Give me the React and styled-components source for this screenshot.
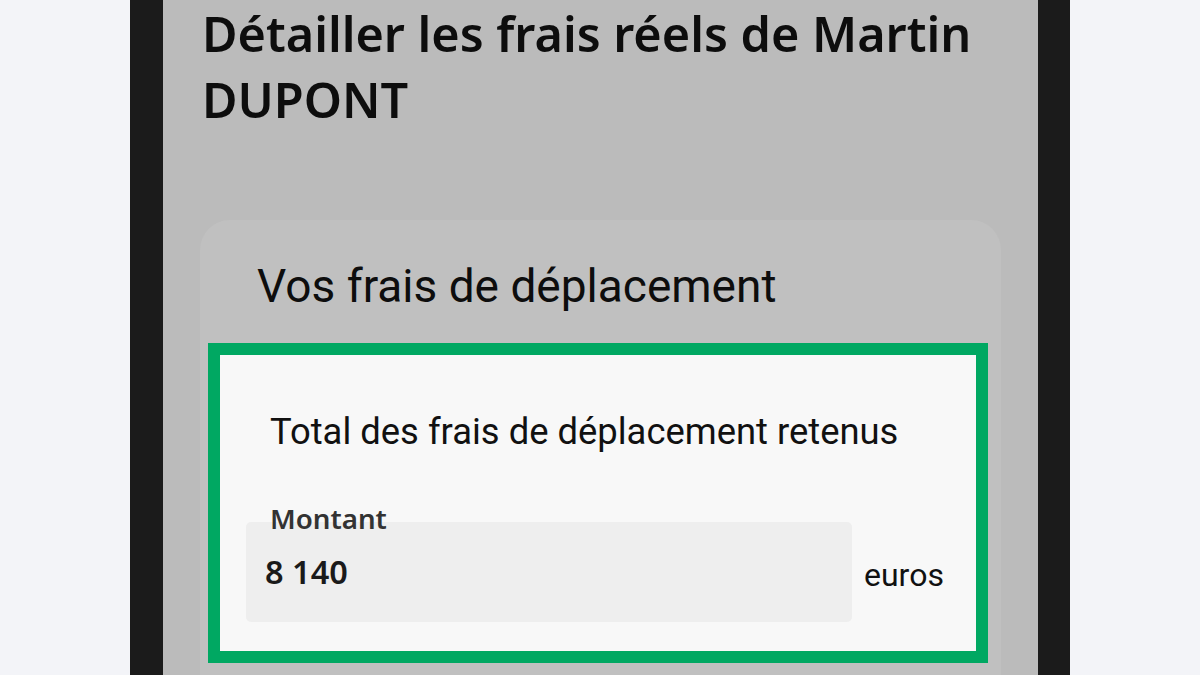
import React from 'react'
import styled, { createGlobalStyle } from 'styled-components'

const GlobalStyle = createGlobalStyle`
  html, body {
    margin: 0;
    padding: 0;
    background: #f3f4f8;
  }
  body {
    font-family: Roboto, "Liberation Sans", sans-serif;
  }
`

const Page = styled.div`
  width: 1200px;
  height: 675px;
  overflow: hidden;
  display: flex;
  justify-content: center;
  background: #f3f4f8;
`

const Phone = styled.div`
  width: 940px;
  height: 675px;
  box-sizing: border-box;
  background: #1b1b1b;
  padding: 0 32px 0 33px;
  display: flex;
`

const Screen = styled.div`
  flex: 1;
  background: #bbbbbb;
  padding: 0 37px;
  display: flex;
  flex-direction: column;
  overflow: hidden;
`

const Title = styled.h1`
  margin: 0;
  padding: 0 0 0 2px;
  font-family: "Noto Sans", "Open Sans", sans-serif;
  font-weight: 600;
  font-size: 48.6px;
  line-height: 66px;
  color: #0d0d0d;
`

const Card = styled.section`
  margin-top: 88px;
  background: #c0c0c0;
  border-radius: 30px 30px 0 0;
  padding: 40px 13px 30px 8px;
  flex: 1;
`

const CardTitle = styled.h2`
  margin: 0 0 31px 49px;
  font-family: Roboto, sans-serif;
  font-weight: 400;
  font-size: 46px;
  line-height: 52px;
  color: #0d0d0d;
`

const Highlight = styled.div`
  border: 12px solid #00a862;
  background: #f8f8f8;
  padding: 55px 32px 29px 26px;
`

const FieldTitle = styled.div`
  font-family: Roboto, sans-serif;
  font-size: 36.4px;
  line-height: 44px;
  color: #111;
  margin-left: 24px;
`

const FieldRow = styled.div`
  margin-top: 68px;
  display: flex;
  align-items: flex-end;
  gap: 12px;
`

const InputBox = styled.div`
  position: relative;
  width: 606px;
  height: 100px;
  background: #eeeeee;
  border-radius: 5px;
  box-sizing: border-box;
  padding: 32px 19px 0;
`

const Label = styled.span`
  position: absolute;
  left: 24px;
  top: -19px;
  font-family: "Noto Sans", sans-serif;
  font-weight: 600;
  font-size: 27.7px;
  line-height: 30px;
  color: #333;
`

const Value = styled.div`
  font-family: "Noto Sans", sans-serif;
  font-weight: 600;
  font-size: 32.5px;
  line-height: 36px;
  color: #1a1a1a;
`

const Unit = styled.span`
  font-family: Roboto, sans-serif;
  font-size: 32px;
  line-height: 36px;
  color: #111;
  padding-bottom: 29px;
`

const App = () => {
  return (
    <>
      <GlobalStyle />
      <Page>
        <Phone>
          <Screen>
            <Title>Détailler les frais réels de Martin DUPONT</Title>
            <Card>
              <CardTitle>Vos frais de déplacement</CardTitle>
              <Highlight>
                <FieldTitle>Total des frais de déplacement retenus</FieldTitle>
                <FieldRow>
                  <InputBox>
                    <Label>Montant</Label>
                    <Value>8 140</Value>
                  </InputBox>
                  <Unit>euros</Unit>
                </FieldRow>
              </Highlight>
            </Card>
          </Screen>
        </Phone>
      </Page>
    </>
  )
}

export default App
